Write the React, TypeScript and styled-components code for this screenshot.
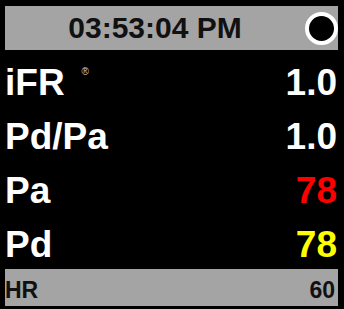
import styled, { createGlobalStyle } from "styled-components";

const GlobalStyle = createGlobalStyle`
  html, body {
    margin: 0;
    padding: 0;
    background: #000;
  }
  body {
    font-family: "Liberation Sans", Arial, sans-serif;
  }
`;

const Screen = styled.div`
  width: 344px;
  height: 309px;
  box-sizing: border-box;
  padding: 6px 6px 0 5px;
  background: #000;
  overflow: hidden;
`;

const ClockBar = styled.div`
  display: flex;
  align-items: center;
  height: 44px;
  background: #a4a4a4;
`;

const Time = styled.div`
  flex: 1;
  text-align: center;
  font-size: 30px;
  font-weight: bold;
  line-height: 44px;
  color: #111;
`;

const StatusDot = styled.div`
  width: 33px;
  height: 33px;
  box-sizing: border-box;
  border-radius: 50%;
  border: 4px solid #fff;
  background: #000;
`;

const Readings = styled.div`
  display: grid;
  grid-auto-rows: 54px;
  height: 213px;
  margin-top: 6px;
`;

const Row = styled.div`
  display: flex;
  align-items: baseline;
  justify-content: space-between;
  font-size: 37px;
  font-weight: bold;
  line-height: 54px;
  padding-right: 1px;
`;

const Label = styled.span`
  color: #fff;
`;

const Registered = styled.span`
  display: inline-block;
  font-size: 10px;
  font-weight: normal;
  line-height: 0;
  color: #d0d0d0;
  margin-left: 17px;
  vertical-align: 20px;
`;

const Value = styled.span<{ $color: string }>`
  color: ${(p) => p.$color};
`;

const HrBar = styled.div`
  display: flex;
  justify-content: space-between;
  height: 37px;
  box-sizing: border-box;
  padding: 6px 3px 0 0;
  background: #a4a4a4;
  font-size: 23px;
  font-weight: bold;
  line-height: 31px;
  color: #111;
`;

const readings = [
  { label: "iFR", value: "1.0", color: "#fff", mark: true },
  { label: "Pd/Pa", value: "1.0", color: "#fff" },
  { label: "Pa", value: "78", color: "#ff0000" },
  { label: "Pd", value: "78", color: "#ffff00" },
];

export default function App() {
  return (
    <>
      <GlobalStyle />
      <Screen>
        <ClockBar>
          <Time>03:53:04 PM</Time>
          <StatusDot />
        </ClockBar>
        <Readings>
          {readings.map((r) => (
            <Row key={r.label}>
              <Label>
                {r.label}
                {r.mark && <Registered>®</Registered>}
              </Label>
              <Value $color={r.color}>{r.value}</Value>
            </Row>
          ))}
        </Readings>
        <HrBar>
          <span>HR</span>
          <span>60</span>
        </HrBar>
      </Screen>
    </>
  );
}
